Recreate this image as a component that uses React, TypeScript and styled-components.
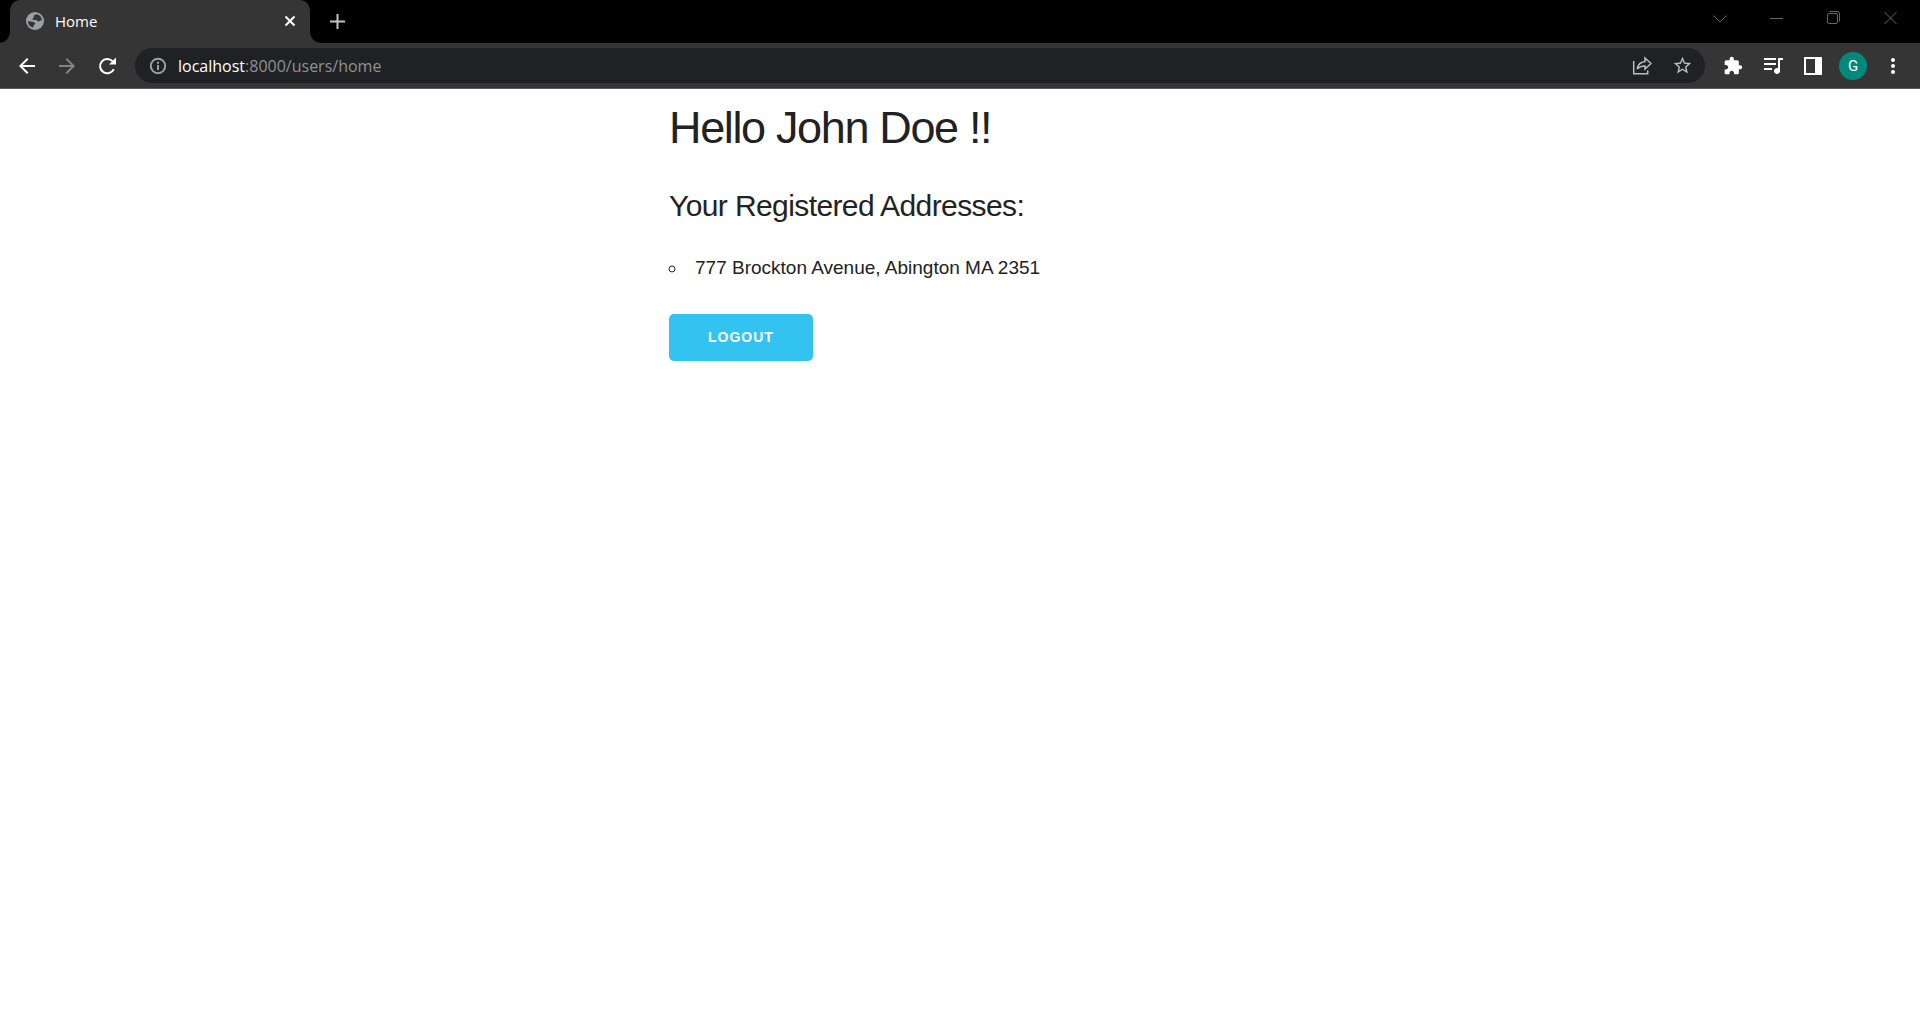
import React from "react";
import styled, { createGlobalStyle } from "styled-components";

const GlobalStyle = createGlobalStyle`
  *, *::before, *::after { box-sizing: border-box; }
  body {
    margin: 0;
    background: #ffffff;
    color: #222222;
    font-family: "Liberation Sans", Arial, sans-serif;
  }
`;

const uiFont = `"Open Sans", "Noto Sans", sans-serif`;

const TabStrip = styled.div`
  display: flex;
  justify-content: space-between;
  height: 43px;
  background: #000000;
`;

const Tabs = styled.div`
  display: flex;
  align-items: center;
  padding-left: 10px;
`;

const Tab = styled.div`
  position: relative;
  display: flex;
  align-items: center;
  gap: 11px;
  width: 300px;
  height: 43px;
  padding: 0 10px 1px 16px;
  border-radius: 10px 10px 0 0;
  background: #353535;

  &::before,
  &::after {
    content: "";
    position: absolute;
    bottom: 0;
    width: 10px;
    height: 10px;
  }
  &::before {
    right: 100%;
    background: radial-gradient(circle at 0 0, #000000 9px, #353535 10px);
  }
  &::after {
    left: 100%;
    background: radial-gradient(circle at 100% 0, #000000 9px, #353535 10px);
  }
`;

const TabTitle = styled.span`
  flex: 1;
  color: #ffffff;
  font: 15px/20px ${uiFont};
`;

const IconButton = styled.button<{ $width?: number; $color?: string }>`
  display: flex;
  align-items: center;
  justify-content: center;
  flex: none;
  width: ${(p) => p.$width ?? 40}px;
  height: 35px;
  padding: 0;
  border: 0;
  background: transparent;
  color: ${(p) => p.$color ?? "#ffffff"};
`;

const NewTab = styled(IconButton)`
  margin-left: 7px;
`;

const WindowControls = styled.div`
  display: flex;
  padding-right: 1px;
`;

const Toolbar = styled.div`
  display: flex;
  align-items: center;
  gap: 8px;
  height: 46px;
  padding: 0 7px;
  border-bottom: 1px solid #5c5c5c;
  background: #353535;
`;

const ButtonGroup = styled.div`
  display: flex;
  align-items: center;
`;

const AddressBar = styled.div`
  display: flex;
  align-items: center;
  flex: 1;
  height: 35px;
  padding: 0 3px 0 13px;
  border-radius: 18px;
  background: #202124;
`;

const Address = styled.a`
  flex: 1;
  margin-left: 10px;
  color: #8f9194;
  font: 16px/24px ${uiFont};
  text-decoration: none;
`;

const Host = styled.span`
  color: #ffffff;
`;

const Avatar = styled.span`
  display: flex;
  align-items: center;
  justify-content: center;
  width: 28px;
  height: 28px;
  border-radius: 50%;
  background: #00897b;
  color: #ffffff;
  font: 15px/20px Roboto, sans-serif;
`;

const Page = styled.main`
  max-width: 582px;
  margin: 0 auto;
  padding-top: 11px;
`;

const Greeting = styled.h1`
  margin: 0 0 27px;
  font-size: 45px;
  font-weight: 400;
  line-height: 56px;
  letter-spacing: -0.03em;
`;

const Subheading = styled.h2`
  margin: 0 0 25px;
  font-size: 30px;
  font-weight: 400;
  line-height: 45px;
  letter-spacing: -0.02em;
`;

const AddressList = styled.ul`
  margin: 0 0 31px;
  padding: 0;
  list-style: circle inside;
  font-size: 19px;
  line-height: 30px;
`;

const PrimaryButton = styled.button`
  height: 47px;
  padding: 0 39px;
  border: 0;
  border-radius: 5px;
  background: #33c3f0;
  color: #ffffff;
  font: 600 14px/47px "Liberation Sans", Arial, sans-serif;
  letter-spacing: 1px;
  text-transform: uppercase;
`;

type IconProps = { size: number; children: React.ReactNode };

const Icon = ({ size, children }: IconProps) => (
  <svg width={size} height={size} viewBox="0 0 24 24" fill="currentColor" aria-hidden="true">
    {children}
  </svg>
);

type LineIconProps = { size: number; stroke: number; children: React.ReactNode };

/* Line icons are drawn on a grid of the same size as the icon itself. */
const LineIcon = ({ size, stroke, children }: LineIconProps) => (
  <svg
    width={size}
    height={size}
    viewBox={`0 0 ${size} ${size}`}
    fill="none"
    stroke="currentColor"
    strokeWidth={stroke}
    aria-hidden="true"
  >
    {children}
  </svg>
);

const Globe = () => (
  <svg width="18" height="18" viewBox="0 0 18 18" aria-hidden="true">
    <circle cx="9" cy="9" r="9" fill="#9aa0a6" />
    <path
      fill="#353535"
      d="M11 2.300c-1.500.3-3.400 1-3.400 2.100 0 .9.300 1.200-.2 1.700-.5.500-1 .4-1 1 0 .7.700.9 1.400.9h2.300c1.200 0 1.200 1.400 2.200 1.600 1.300.2 1.500-1.300 2.500-1.300.5 0 .7.3 1.100.4A7 7 0 0 0 11 2.300zM2 9.200c1.400-.2 3 0 4.300.6 1.200.6 3 .6 3 1.800 0 1-1.500 1.100-1.700 2-.1.800.2 1.500-.3 2A7 7 0 0 1 2 9.200z"
    />
  </svg>
);

export default function App() {
  return (
    <>
      <GlobalStyle />
      <header>
        <TabStrip>
          <Tabs>
            <Tab>
              <Globe />
              <TabTitle>Home</TabTitle>
              <IconButton $width={20} aria-label="Close tab">
                <LineIcon size={12} stroke={2}>
                  <path d="M1.500 1.500l9 9M10.500 1.500l-9 9" />
                </LineIcon>
              </IconButton>
            </Tab>
            <NewTab aria-label="New tab" $color="#c4c4c4">
              <LineIcon size={15} stroke={2}>
                <path d="M7.500 0v15M0 7.500h15" />
              </LineIcon>
            </NewTab>
          </Tabs>
          <WindowControls>
            <IconButton $width={57} $color="#666666" aria-label="Search tabs">
              <LineIcon size={14} stroke={1}>
                <path d="M.5 4.500l6.500 6.500L13.500 4.500" />
              </LineIcon>
            </IconButton>
            <IconButton $width={57} $color="#666666" aria-label="Minimize">
              <LineIcon size={13} stroke={1}>
                <path d="M0 7.500h13" />
              </LineIcon>
            </IconButton>
            <IconButton $width={57} $color="#666666" aria-label="Restore">
              <LineIcon size={13} stroke={1}>
                <rect x=".5" y="3.500" width="10" height="10" rx="1.500" transform="translate(0 -1)" />
                <path d="M2.500 .5h7.500a2.500 2.500 0 0 1 2.500 2.500V10.500" />
              </LineIcon>
            </IconButton>
            <IconButton $width={57} $color="#666666" aria-label="Close">
              <LineIcon size={13} stroke={1}>
                <path d="M.5 1l12 12M12.500 1l-12 12" />
              </LineIcon>
            </IconButton>
          </WindowControls>
        </TabStrip>
        <Toolbar>
          <ButtonGroup>
            <IconButton aria-label="Back">
              <Icon size={24}>
                <path d="M20 11H7.830l5.590-5.590L12 4l-8 8 8 8 1.410-1.410L7.830 13H20v-2z" />
              </Icon>
            </IconButton>
            <IconButton $color="#838383" aria-label="Forward">
              <Icon size={24}>
                <path d="M12 4l-1.410 1.410L16.170 11H4v2h12.170l-5.580 5.590L12 20l8-8z" />
              </Icon>
            </IconButton>
            <IconButton aria-label="Reload">
              <LineIcon size={20} stroke={2}>
                <path d="M16.800 13.200A7.200 7.200 0 1 1 15.500 5.100" />
                <path d="M19 1.500v7h-7z" fill="currentColor" stroke="none" />
              </LineIcon>
            </IconButton>
          </ButtonGroup>
          <AddressBar>
            <IconButton $width={20} $color="#9aa0a6" aria-label="Site information">
              <LineIcon size={18} stroke={2}>
                <circle cx="9" cy="9" r="7.200" />
                <path d="M9 8v5M9 4.800v2" />
              </LineIcon>
            </IconButton>
            <Address href="#">
              <Host>localhost</Host>:8000/users/home
            </Address>
            <IconButton $color="#bdbdbd" aria-label="Share">
              <LineIcon size={20} stroke={1.500}>
                <path d="M1.700 5v12.800h14V14.500" />
                <path d="M13 2l6 5.500-6 5.500V9.900c-3.700 0-6.100.8-7.800 3.300.5-4.500 3.100-7.200 7.800-7.800z" />
              </LineIcon>
            </IconButton>
            <IconButton $color="#bdbdbd" aria-label="Bookmark this page">
              <Icon size={21}>
                <path d="M22 9.240l-7.190-.62L12 2 9.190 8.630 2 9.240l5.460 4.730L5.820 21 12 17.270 18.180 21l-1.630-7.030L22 9.240zM12 15.400l-3.760 2.270 1-4.280-3.320-2.880 4.380-.38L12 6.100l1.710 4.040 4.380.38-3.320 2.880 1 4.280L12 15.400z" />
              </Icon>
            </IconButton>
          </AddressBar>
          <ButtonGroup>
            <IconButton aria-label="Extensions">
              <Icon size={20}>
                <path d="M20.500 11H19V7c0-1.100-.9-2-2-2h-4V3.500C13 2.120 11.880 1 10.500 1S8 2.120 8 3.500V5H4c-1.100 0-1.990.9-1.990 2v3.800H3.500c1.490 0 2.700 1.210 2.700 2.700s-1.210 2.700-2.700 2.700H2V20c0 1.100.9 2 2 2h3.800v-1.500c0-1.490 1.210-2.700 2.700-2.700 1.490 0 2.700 1.210 2.700 2.700V22H17c1.100 0 2-.9 2-2v-4h1.500c1.380 0 2.500-1.120 2.500-2.500S21.880 11 20.500 11z" />
              </Icon>
            </IconButton>
            <IconButton aria-label="Media controls">
              <Icon size={24}>
                <path d="M15 4H3v2h12V4zm0 5H3v2h12V9zM3 16h8v-2H3v2zM17 4v10.180c-.31-.11-.65-.18-1-.18-1.660 0-3 1.340-3 3s1.340 3 3 3 3-1.340 3-3V6h3V4h-5z" />
              </Icon>
            </IconButton>
            <IconButton aria-label="Side panel">
              <LineIcon size={18} stroke={2}>
                <rect x="1" y="1" width="16" height="16" />
                <path d="M11 0h7v18h-7z" fill="currentColor" stroke="none" />
              </LineIcon>
            </IconButton>
            <IconButton aria-label="Profile">
              <Avatar>G</Avatar>
            </IconButton>
            <IconButton aria-label="Menu">
              <LineIcon size={18} stroke={0}>
                <g fill="currentColor">
                  <circle cx="9" cy="3" r="2" />
                  <circle cx="9" cy="9" r="2" />
                  <circle cx="9" cy="15" r="2" />
                </g>
              </LineIcon>
            </IconButton>
          </ButtonGroup>
        </Toolbar>
      </header>
      <Page>
        <Greeting>Hello John Doe !!</Greeting>
        <Subheading>Your Registered Addresses:</Subheading>
        <AddressList>
          <li>777 Brockton Avenue, Abington MA 2351</li>
        </AddressList>
        <PrimaryButton type="button">Logout</PrimaryButton>
      </Page>
    </>
  );
}
